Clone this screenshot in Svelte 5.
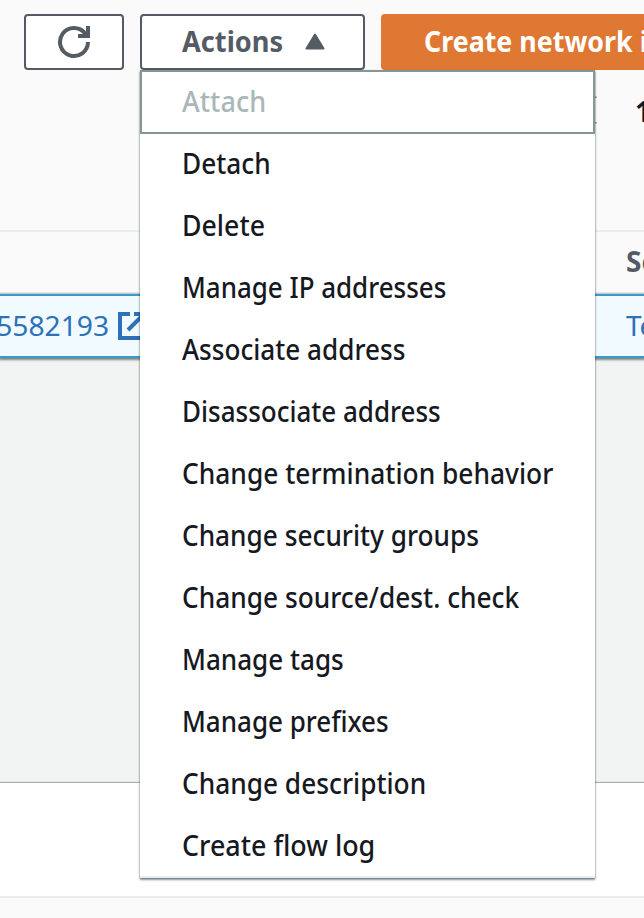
<script>
  const items = [
    { label: 'Attach', width: 84, disabled: true },
    { label: 'Detach', width: 89 },
    { label: 'Delete', width: 83 },
    { label: 'Manage IP addresses', width: 264 },
    { label: 'Associate address', width: 223 },
    { label: 'Disassociate address', width: 259 },
    { label: 'Change termination behavior', width: 371 },
    { label: 'Change security groups', width: 297 },
    { label: 'Change source/dest. check', width: 337 },
    { label: 'Manage tags', width: 162 },
    { label: 'Manage prefixes', width: 207 },
    { label: 'Change description', width: 244 },
    { label: 'Create flow log', width: 193 }
  ];

  // Condenses a label horizontally so that it takes the given width.
  function fit(node, width) {
    node.style.transform = `scaleX(${width / node.offsetWidth})`;
  }
</script>

<div class="page">
  <header class="toolbar">
    <div class="buttons">
      <button class="btn refresh" aria-label="Refresh">
        <svg width="34" height="34" viewBox="0 0 34 34" fill="none" stroke="#545b64" stroke-width="4">
          <path d="M31 17A14 14 0 1 1 28.2 8.6L30 11" />
          <path d="M31 1V11H21" />
        </svg>
      </button>
      <div class="dropdown">
        <button class="btn actions">
          <span class="text" use:fit={101}>Actions</span>
          <svg class="caret" width="20" height="17" viewBox="0 0 20 17">
            <path d="M10 1.5L18.5 15.5H1.5Z" fill="#545b64" stroke="#545b64" stroke-width="2" stroke-linejoin="round" />
          </svg>
        </button>
        <ul class="menu">
          {#each items as item}
            <li class:disabled={item.disabled}><span class="text" use:fit={item.width}>{item.label}</span></li>
          {/each}
        </ul>
      </div>
      <button class="btn primary"><span class="text" use:fit={337}>Create network interface</span></button>
    </div>
    <div class="paging"><i class="edge"></i><span class="text">1</span></div>
  </header>
  <div class="row head"><span class="text last">Security group</span></div>
  <div class="row selected">
    <span class="id"><span class="text" use:fit={129}>35582193</span></span>
    <svg class="ext" width="30" height="30" viewBox="0 0 30 30" fill="none" stroke="#2d72b8" stroke-width="4">
      <path d="M12 3H2V27H26V17M16 3H27V12M26 3L10 19" />
    </svg>
    <span class="text last">Test</span>
  </div>
  <div class="split"></div>
  <div class="panel"></div>
  <footer></footer>
</div>

<style>
  :global(body) { overflow: hidden; }
  .page {
    width: 644px; height: 918px; overflow: hidden; display: flex; flex-direction: column;
    background: #fff; color: #16191f; font: 500 28px/40px "Noto Sans", sans-serif;
  }
  .text { display: inline-block; flex: none; white-space: nowrap; transform-origin: 0 50%; margin-bottom: 2px; }
  .toolbar { height: 230px; background: #fafafa; border-bottom: 2px solid #eaeded; flex: none; }
  .buttons { display: flex; gap: 16px; padding: 14px 0 0 24px; width: 800px; box-sizing: border-box; }
  .btn {
    box-sizing: border-box; height: 56px; flex: none; display: flex; align-items: center; margin: 0; padding: 0;
    background: #fff; border: 2px solid #545b64; border-radius: 4px; color: #545b64;
    font: 700 28px/40px "Noto Sans", sans-serif;
  }
  .refresh { width: 100px; justify-content: center; }
  .dropdown { position: relative; width: 225px; flex: none; }
  .actions { width: 225px; padding: 0 38px 0 40px; justify-content: space-between; }
  .caret { margin-bottom: 1px; }
  .primary { width: 428px; padding-left: 41px; background: #df7832; border-color: #df7832; color: #fff; }
  .menu {
    position: absolute; z-index: 2; left: 0; top: 56px; width: 455px; height: 808px; box-sizing: border-box;
    margin: 0; padding: 1px 0 0; list-style: none; background: #fff; border-bottom: 2px solid #eaeded;
    box-shadow: 0 1px 2px 0 rgba(0, 28, 36, .5), 0 2px 2px 0 rgba(0, 28, 36, .3);
  }
  li { height: 62px; padding-left: 42px; box-sizing: border-box; display: flex; align-items: center; }
  li.disabled { height: 64px; margin: -1px 0; padding-left: 40px; border: 2px solid #879596; color: #aab7b8; }
  .paging { height: 80px; display: flex; align-items: center; padding-left: 590px; font-weight: 700; }
  .edge { width: 7px; height: 28px; box-sizing: border-box; border: 2px solid #9ba7a8; border-left: 0; border-right: 0; border-radius: 2px; margin-right: 39px; flex: none; }
  .row { box-sizing: border-box; flex: none; display: flex; align-items: center; }
  .head { height: 62px; background: #fafafa; border-bottom: 2px solid #eaeded; color: #545b64; font-weight: 700; }
  .selected {
    position: relative; height: 64px; background: #f1faff; border: solid #3b9ac6; border-width: 2px 0;
    box-shadow: 0 1px 2px 1px rgba(0, 28, 36, .5); color: #2d72b8;
  }
  .selected .text { font-weight: 450; }
  .id { width: 111px; display: flex; flex: none; margin-left: -20px; }
  .ext { margin-left: 27px; flex: none; }
  .head .last { margin-left: 626px; }
  .selected .last { margin-left: 478px; }
  .paging .text { margin: 2px 0 0 -1px; }
  .split { height: 425px; background: #f2f3f3; flex: none; }
  .panel { height: 115px; box-sizing: border-box; background: #fff; border-bottom: 2px solid #eaeded; box-shadow: 0 -1px 1px rgba(0, 28, 36, .3); flex: none; }
  footer { flex: 1; background: #fafafa; }
</style>
